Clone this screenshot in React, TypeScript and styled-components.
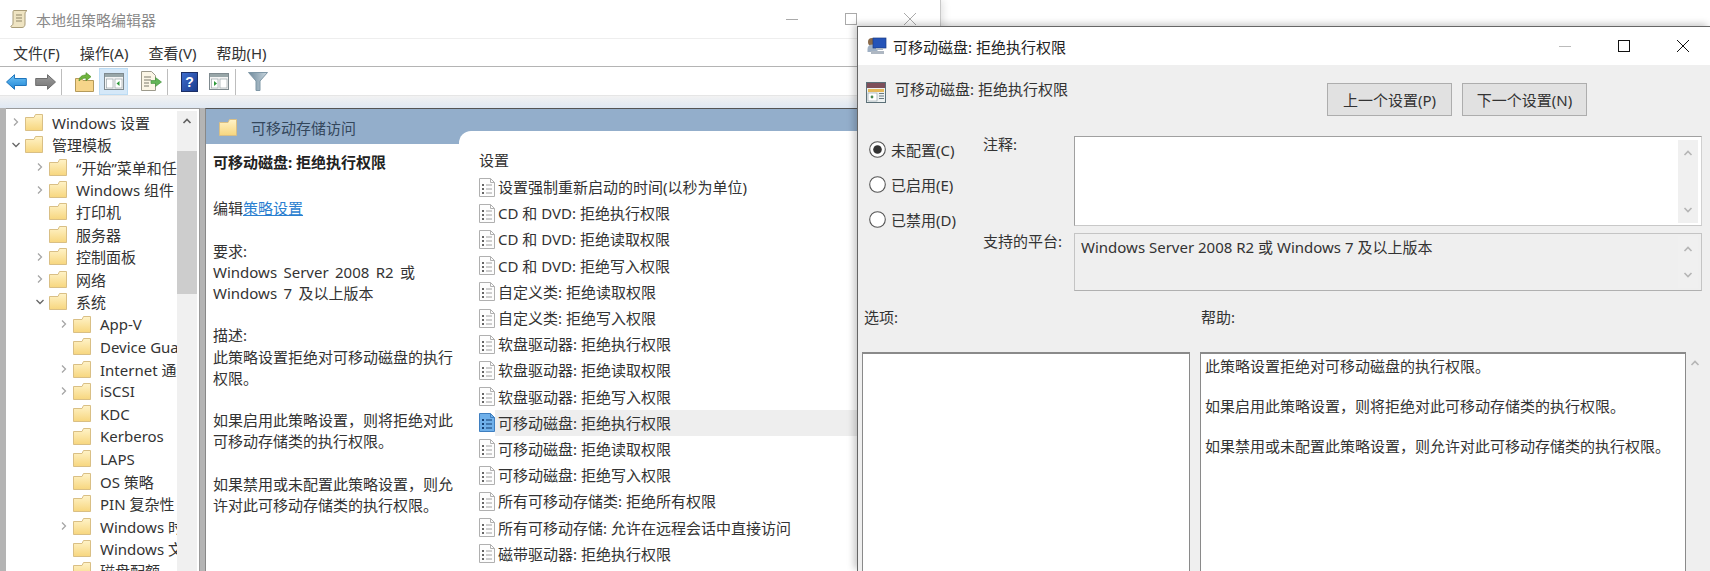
import styled, { createGlobalStyle } from 'styled-components';

const FONT = '"Noto Sans", "Noto Sans CJK SC", sans-serif';

const GlobalStyle = createGlobalStyle`
	html, body {
		margin: 0;
		padding: 0;
		width: 1710px;
		height: 571px;
		overflow: hidden;
		background: #fff;
		font-family: ${FONT};
		font-size: 15px;
		color: #333;
	}
	* {
		box-sizing: border-box;
	}
	svg {
		flex: none;
	}
`;

const TREE = [
	{ level: 0, arrow: 'right', label: 'Windows 设置' },
	{ level: 0, arrow: 'down', label: '管理模板' },
	{ level: 1, arrow: 'right', label: '“开始”菜单和任务栏' },
	{ level: 1, arrow: 'right', label: 'Windows 组件' },
	{ level: 1, arrow: '', label: '打印机' },
	{ level: 1, arrow: '', label: '服务器' },
	{ level: 1, arrow: 'right', label: '控制面板' },
	{ level: 1, arrow: 'right', label: '网络' },
	{ level: 1, arrow: 'down', label: '系统' },
	{ level: 2, arrow: 'right', label: 'App-V' },
	{ level: 2, arrow: '', label: 'Device Guard' },
	{ level: 2, arrow: 'right', label: 'Internet 通信管理' },
	{ level: 2, arrow: 'right', label: 'iSCSI' },
	{ level: 2, arrow: '', label: 'KDC' },
	{ level: 2, arrow: '', label: 'Kerberos' },
	{ level: 2, arrow: '', label: 'LAPS' },
	{ level: 2, arrow: '', label: 'OS 策略' },
	{ level: 2, arrow: '', label: 'PIN 复杂性' },
	{ level: 2, arrow: 'right', label: 'Windows 时间服务' },
	{ level: 2, arrow: '', label: 'Windows 文件保护' },
	{ level: 2, arrow: '', label: '磁盘配额' },
];

const SETTINGS = [
	'设置强制重新启动的时间(以秒为单位)',
	'CD 和 DVD: 拒绝执行权限',
	'CD 和 DVD: 拒绝读取权限',
	'CD 和 DVD: 拒绝写入权限',
	'自定义类: 拒绝读取权限',
	'自定义类: 拒绝写入权限',
	'软盘驱动器: 拒绝执行权限',
	'软盘驱动器: 拒绝读取权限',
	'软盘驱动器: 拒绝写入权限',
	'可移动磁盘: 拒绝执行权限',
	'可移动磁盘: 拒绝读取权限',
	'可移动磁盘: 拒绝写入权限',
	'所有可移动存储类: 拒绝所有权限',
	'所有可移动存储: 允许在远程会话中直接访问',
	'磁带驱动器: 拒绝执行权限',
];
const SELECTED = 9;

function Folder() {
	return (
		<svg width="18" height="17" viewBox="0 0 18 17">
			<defs>
				<linearGradient id="fold" x1="0" y1="0" x2="0" y2="1">
					<stop offset="0" stopColor="#fff3c8" />
					<stop offset="1" stopColor="#f7d67e" />
				</linearGradient>
			</defs>
			<path d="M.5 3.500h8.500l1.500-3h7v16H.5z" fill="url(#fold)" stroke="#d9bf85" />
		</svg>
	);
}

function Chevron({ dir }: { dir: string }) {
	return (
		<svg width="10" height="10" viewBox="0 0 10 10" fill="none" stroke="#a6a6a6" strokeWidth="1.3">
			{dir === 'right' ? <path d="M3 1.500 6.500 5 3 8.500" /> : <path d="M1.500 3 5 6.500 8.500 3" stroke="#666" />}
		</svg>
	);
}

function ScrollArrow({ up, color = '#b5b5b5' }: { up?: boolean; color?: string }) {
	return (
		<svg width="10" height="8" viewBox="0 0 10 8" fill="none" stroke={color} strokeWidth="1.6">
			{up ? <path d="M1.500 6 5 2.500 8.500 6" /> : <path d="M1.500 2 5 5.500 8.500 2" />}
		</svg>
	);
}

function PolicyIcon({ active }: { active?: boolean }) {
	const stroke = active ? '#3f7fc0' : '#b0b0b0';
	const ink = active ? '#143f73' : '#666';
	return (
		<svg width="16" height="19" viewBox="0 0 16 19">
			<path d="M.5.5h11l4 4v14H.5z" fill={active ? '#6fb0ea' : '#fdfdfd'} stroke={stroke} />
			<path d="M11.500.5v4h4" fill="none" stroke={stroke} />
			<g fill={ink}>
				<rect x="3" y="6" width="2" height="2" />
				<rect x="3" y="10" width="2" height="2" />
				<rect x="3" y="14" width="2" height="2" />
			</g>
			<g stroke={active ? '#143f73' : '#a0a0a0'}>
				<path d="M7 7h6M7 11h6M7 15h6" />
			</g>
		</svg>
	);
}

function ScrollLogo() {
	return (
		<svg width="19" height="20" viewBox="0 0 19 20">
			<path d="M4 1.500h13c-1.500 1-2 2-2 3.500v10c0 2-1 3.500-3 3.500H2c-1 0-1.500-1-1-1.500 1.500-.5 2-1.500 2-3V4c0-1.500 0-2.500 1-2.500z" fill="#efe4c2" stroke="#a99c78" />
			<path d="M6 6h6M6 9h6M6 12h6" stroke="#8f8668" />
		</svg>
	);
}

function BackArrow({ flip, top, bottom, edge }: { flip?: boolean; top: string; bottom: string; edge: string }) {
	const id = flip ? 'arrF' : 'arrB';
	return (
		<svg width="21" height="16" viewBox="0 0 21 16">
			<defs>
				<linearGradient id={id} x1="0" y1="0" x2="0" y2="1">
					<stop offset="0" stopColor={top} />
					<stop offset="1" stopColor={bottom} />
				</linearGradient>
			</defs>
			<path
				d={flip ? 'M20.500 8 12.500.7v3.800H.7v7h11.800v3.800z' : 'M.5 8 8.500.7v3.800h11.800v7H8.500v3.800z'}
				fill={`url(#${id})`}
				stroke={edge}
			/>
		</svg>
	);
}

function UpFolderIcon() {
	return (
		<svg width="19" height="20" viewBox="0 0 19 20">
			<path d="M.5 6.500h6l1.500 2h10.500v11H.5z" fill="#f6d58a" stroke="#b59a5a" />
			<path d="M4 9c0-4 3-6 7-6V.7l5 4-5 4V6c-3 0-5 1-7 3z" fill="#6fb53e" stroke="#4f8f26" strokeWidth=".7" />
		</svg>
	);
}

function PaneIcon({ flip }: { flip?: boolean }) {
	return (
		<svg width="20" height="17" viewBox="0 0 20 17">
			<rect x=".5" y=".5" width="19" height="16" fill="#f4f4f4" stroke="#7f8a8f" />
			<rect x="1" y="1" width="18" height="3" fill="#98a6a8" />
			<rect x="2.500" y="6" width="6.500" height="9" fill="#fff" stroke="#9aa5a8" strokeWidth=".7" />
			<rect x="11" y="6" width="7" height="9" fill="#fff" stroke="#9aa5a8" strokeWidth=".7" />
			{flip ? <path d="M5 8v5l3-2.500z" fill="#2f9a3a" /> : <path d="M15.500 8v5l-3-2.500z" fill="#2f9a3a" />}
		</svg>
	);
}

function ExportIcon() {
	return (
		<svg width="21" height="21" viewBox="0 0 21 21">
			<path d="M.5.5h10l4 4v15H.5z" fill="#fbf6e6" stroke="#9d9a8c" />
			<path d="M3 6h7M3 9h7M3 12h5M3 15h5" stroke="#7d7a6c" />
			<path d="M10 9.500h4.500V6.500l6 4.500-6 4.500v-3H10z" fill="#62b556" stroke="#3f8d38" strokeWidth=".6" />
		</svg>
	);
}

function HelpBook() {
	return (
		<svg width="17" height="20" viewBox="0 0 17 20">
			<defs>
				<linearGradient id="book" x1="0" y1="0" x2="1" y2="1">
					<stop offset="0" stopColor="#3f6fd0" />
					<stop offset="1" stopColor="#1a3a8a" />
				</linearGradient>
			</defs>
			<rect x=".5" y=".5" width="16" height="19" fill="url(#book)" stroke="#1c2f66" />
			<text x="8.500" y="15" fontSize="14" fontWeight="700" textAnchor="middle" fill="#fff" fontFamily="Liberation Sans, sans-serif">
				?
			</text>
		</svg>
	);
}

function Funnel() {
	return (
		<svg width="20" height="19" viewBox="0 0 20 19">
			<defs>
				<linearGradient id="fun" x1="0" y1="0" x2="1" y2="0">
					<stop offset="0" stopColor="#6f8a9c" />
					<stop offset="1" stopColor="#c9d6de" />
				</linearGradient>
			</defs>
			<path d="M.5.5h19L12 9v9.500H8V9z" fill="url(#fun)" stroke="#7f97a6" />
		</svg>
	);
}

function ComputerIcon() {
	return (
		<svg width="20" height="18" viewBox="0 0 20 18">
			<circle cx="5" cy="5" r="4" fill="#8a6a4a" />
			<path d="M.5 12c0-3 2-4.500 5-4.500s5 1.500 5 4.500v3H.5z" fill="#9fb0c4" />
			<rect x="6" y="1" width="13" height="10" fill="#2453b8" stroke="#1b3a80" strokeWidth=".7" />
			<path d="M9 11h7v2H9zM4 14h13v3H4z" fill="#aeb7c2" />
		</svg>
	);
}

function PolicyPaneIcon() {
	return (
		<svg width="20" height="21" viewBox="0 0 20 21">
			<rect x=".5" y=".5" width="19" height="20" fill="#eef2f2" stroke="#5c7078" />
			<rect x="1" y="1" width="18" height="5" fill="#7d4f5a" />
			<rect x="2" y="7" width="16" height="3" fill="#e5b95a" />
			<rect x="2" y="11" width="9" height="8" fill="#fff" stroke="#8a9aa0" strokeWidth=".6" />
			<path d="M13 11.500h5M13 14h5M13 16.500h5" stroke="#6a7a80" />
			<circle cx="6" cy="15" r="1.400" fill="#4a8a50" />
		</svg>
	);
}

function Radio({ checked }: { checked?: boolean }) {
	return (
		<svg width="17" height="17" viewBox="0 0 17 17">
			<circle cx="8.500" cy="8.500" r="7.800" fill="#fff" stroke="#555" strokeWidth="1.100" />
			{checked && <circle cx="8.500" cy="8.500" r="4.300" fill="#333" />}
		</svg>
	);
}

export default function App() {
	return (
		<Desktop>
			<GlobalStyle />
			<MainWindow>
				<TitleBar>
					<ScrollLogo />
					<TitleText>本地组策略编辑器</TitleText>
					<WinControls $right={24} $color="#aaa">
						<MinLine />
						<MaxBox />
						<CloseMark />
					</WinControls>
				</TitleBar>
				<MenuBar>
					<MenuItem>文件(F)</MenuItem>
					<MenuItem>操作(A)</MenuItem>
					<MenuItem>查看(V)</MenuItem>
					<MenuItem>帮助(H)</MenuItem>
				</MenuBar>
				<Toolbar>
					<ToolButton $w={29}>
						<BackArrow top="#6fc3f5" bottom="#1f86d6" edge="#1f74bb" />
					</ToolButton>
					<ToolButton $w={29}>
						<BackArrow flip top="#9c9c9c" bottom="#767676" edge="#6e6e6e" />
					</ToolButton>
					<ToolSep />
					<ToolButton $w={30}>
						<UpFolderIcon />
					</ToolButton>
					<ToolButton $w={29} $active>
						<PaneIcon />
					</ToolButton>
					<ToolButton $w={38} $pad={8}>
						<ExportIcon />
					</ToolButton>
					<ToolSep />
					<ToolButton $w={28}>
						<HelpBook />
					</ToolButton>
					<ToolButton $w={31}>
						<PaneIcon flip />
					</ToolButton>
					<ToolSep />
					<ToolButton $w={30}>
						<Funnel />
					</ToolButton>
				</Toolbar>
				<ToolStrip />
				<Workspace>
					<TreePane>
						<TreeList>
							{TREE.map((row) => (
								<TreeRow key={row.label} $level={row.level}>
									<ArrowSlot>{row.arrow && <Chevron dir={row.arrow} />}</ArrowSlot>
									<Folder />
									<TreeLabel>{row.label}</TreeLabel>
								</TreeRow>
							))}
						</TreeList>
						<TreeScroll>
							<ScrollCap>
								<ScrollArrow up color="#606060" />
							</ScrollCap>
							<ScrollThumb />
						</TreeScroll>
					</TreePane>
					<ContentPane>
						<DetailColumn>
							<PaneHeader>
								<Folder />
								<span>可移动存储访问</span>
							</PaneHeader>
							<DetailBody>
								<DetailTitle>可移动磁盘: 拒绝执行权限</DetailTitle>
								<DetailPara>
									编辑<PolicyLink>策略设置</PolicyLink>
								</DetailPara>
								<DetailPara>
									要求:
									<br />
									Windows Server 2008 R2 或 Windows 7 及以上版本
								</DetailPara>
								<DetailPara>
									描述:
									<br />
									此策略设置拒绝对可移动磁盘的执行权限。
								</DetailPara>
								<DetailPara>如果启用此策略设置，则将拒绝对此可移动存储类的执行权限。</DetailPara>
								<DetailPara>如果禁用或未配置此策略设置，则允许对此可移动存储类的执行权限。</DetailPara>
							</DetailBody>
						</DetailColumn>
						<SettingsColumn>
							<SettingsHead>设置</SettingsHead>
							{SETTINGS.map((item, idx) => (
								<SettingRow key={item}>
									<PolicyIcon active={idx === SELECTED} />
									<SettingLabel $selected={idx === SELECTED}>{item}</SettingLabel>
								</SettingRow>
							))}
						</SettingsColumn>
					</ContentPane>
				</Workspace>
			</MainWindow>

			<Dialog>
				<DialogTitleBar>
					<ComputerIcon />
					<DialogTitle>可移动磁盘: 拒绝执行权限</DialogTitle>
					<WinControls $right={21} $color="#111">
						<MinLine $light />
						<MaxBox />
						<CloseMark />
					</WinControls>
				</DialogTitleBar>
				<DialogBody>
					<DialogHead>
						<DialogHeadTitle>
							<PolicyPaneIcon />
							<span>可移动磁盘: 拒绝执行权限</span>
						</DialogHeadTitle>
						<NavButtons>
							<NavButton>上一个设置(P)</NavButton>
							<NavButton>下一个设置(N)</NavButton>
						</NavButtons>
					</DialogHead>
					<ConfigArea>
						<RadioGroup>
							<RadioRow>
								<Radio checked />
								未配置(C)
							</RadioRow>
							<RadioRow>
								<Radio />
								已启用(E)
							</RadioRow>
							<RadioRow>
								<Radio />
								已禁用(D)
							</RadioRow>
						</RadioGroup>
						<FieldGrid>
							<FieldLabel>注释:</FieldLabel>
							<CommentBox>
								<BoxScroll>
									<ScrollArrow up />
									<ScrollArrow />
								</BoxScroll>
							</CommentBox>
							<FieldLabel>支持的平台:</FieldLabel>
							<PlatformBox>
								<span>Windows Server 2008 R2 或 Windows 7 及以上版本</span>
								<BoxScroll>
									<ScrollArrow up />
									<ScrollArrow />
								</BoxScroll>
							</PlatformBox>
						</FieldGrid>
					</ConfigArea>
					<PaneLabels>
						<span>选项:</span>
						<span>帮助:</span>
					</PaneLabels>
					<BottomPanes>
						<OptionsBox />
						<HelpBox>
							<p>此策略设置拒绝对可移动磁盘的执行权限。</p>
							<p>如果启用此策略设置，则将拒绝对此可移动存储类的执行权限。</p>
							<p>如果禁用或未配置此策略设置，则允许对此可移动存储类的执行权限。</p>
						</HelpBox>
						<HelpScroll>
							<ScrollArrow up />
						</HelpScroll>
					</BottomPanes>
				</DialogBody>
			</Dialog>
		</Desktop>
	);
}

const Desktop = styled.div`
	position: relative;
	width: 1710px;
	height: 571px;
	overflow: hidden;
	background: #fff;
`;

const MainWindow = styled.section`
	display: flex;
	flex-direction: column;
	width: 941px;
	height: 571px;
	background: #fff;
	border-right: 1px solid #c8c8c8;
	box-shadow: 2px 0 8px rgba(0, 0, 0, 0.12);
`;

const TitleBar = styled.header`
	display: flex;
	align-items: center;
	height: 38px;
	padding-left: 10px;
	flex: none;
`;

const TitleText = styled.span`
	margin-left: 7px;
	color: #8a8a8a;
`;

const WinControls = styled.div<{ $right: number; $color: string }>`
	display: flex;
	align-items: center;
	gap: 47px;
	margin-left: auto;
	margin-right: ${(p) => p.$right}px;
	color: ${(p) => p.$color};
`;

const MinLine = styled.i<{ $light?: boolean }>`
	display: block;
	width: 12px;
	height: 1px;
	background: ${(p) => (p.$light ? '#bbb' : 'currentColor')};
`;

const MaxBox = styled.i`
	display: block;
	width: 12px;
	height: 12px;
	border: 1px solid currentColor;
`;

const CloseMark = styled.i`
	display: block;
	width: 12px;
	height: 12px;
	background:
		linear-gradient(45deg, transparent 46%, currentColor 46%, currentColor 54%, transparent 54%),
		linear-gradient(-45deg, transparent 46%, currentColor 46%, currentColor 54%, transparent 54%);
`;

const MenuBar = styled.nav`
	display: flex;
	align-items: center;
	gap: 20px;
	height: 29px;
	padding-left: 13px;
	flex: none;
	border-top: 1px solid #eee;
	border-bottom: 1px solid #b4b4b4;
`;

const MenuItem = styled.span`
	white-space: nowrap;
	color: #333;
`;

const Toolbar = styled.div`
	display: flex;
	align-items: center;
	height: 28px;
	padding: 1px 0 0 2px;
	flex: none;
`;

const ToolButton = styled.div<{ $w: number; $active?: boolean; $pad?: number }>`
	display: flex;
	align-items: center;
	justify-content: center;
	width: ${(p) => p.$w}px;
	height: 27px;
	padding-left: ${(p) => p.$pad ?? 0}px;
	background: ${(p) => (p.$active ? '#d5e8f8' : 'transparent')};
	border: 1px solid ${(p) => (p.$active ? '#bcdcf4' : 'transparent')};
`;

const ToolSep = styled.i`
	display: block;
	width: 1px;
	height: 26px;
	margin: 0 7px 0 1px;
	background: #bdbdbd;
`;

const ToolStrip = styled.div`
	height: 13px;
	flex: none;
	border-top: 1px solid #e6e6e6;
	background: linear-gradient(#f2f2f2, #dfe8f3);
`;

const Workspace = styled.div`
	display: flex;
	flex: 1;
	min-height: 0;
	background: #b4b4b4;
	padding-left: 6px;
`;

const TreePane = styled.div`
	display: flex;
	width: 194px;
	flex: none;
	padding: 2px 2px 0 0;
	background: #fff;
	border-top: 1px solid #9a9a9a;
	border-right: 1px solid #9a9a9a;
	overflow: hidden;
`;

const TreeList = styled.div`
	width: 171px;
	flex: none;
	overflow: hidden;
`;

const TreeRow = styled.div<{ $level: number }>`
	display: flex;
	align-items: center;
	height: 22.45px;
	padding-left: ${(p) => p.$level * 24}px;
	white-space: nowrap;
`;

const ArrowSlot = styled.span`
	display: flex;
	justify-content: center;
	width: 19px;
	flex: none;
`;

const TreeLabel = styled.span`
	margin-left: 9px;
	color: #333;
`;

const TreeScroll = styled.div`
	display: flex;
	flex-direction: column;
	width: 20px;
	flex: none;
	background: #f0f0f0;
`;

const ScrollCap = styled.div`
	display: flex;
	align-items: center;
	justify-content: center;
	height: 40px;
	padding-bottom: 20px;
`;

const ScrollThumb = styled.div`
	height: 143px;
	background: #cdcdcd;
`;

const ContentPane = styled.div`
	display: grid;
	grid-template-columns: 253px 1fr;
	flex: 1;
	margin-left: 5px;
	background: #93aecb;
	border-top: 1px solid #555;
	border-left: 1px solid #888;
	padding-top: 1px;
`;

const DetailColumn = styled.div`
	display: flex;
	flex-direction: column;
	min-width: 0;
`;

const PaneHeader = styled.div`
	display: flex;
	align-items: center;
	gap: 14px;
	height: 34px;
	padding-left: 13px;
	flex: none;
	color: #33475c;
`;

const DetailBody = styled.div`
	flex: 1;
	padding: 8px 0 0 7px;
	background: #fff;
	line-height: 21.2px;
`;

const DetailTitle = styled.h3`
	margin: 0 0 25px;
	font-size: 15px;
	font-weight: 700;
	color: #222;
`;

const DetailPara = styled.p`
	margin: 0 0 21.2px;
	width: 245px;
	word-spacing: 2.5px;
	color: #333;
`;

const PolicyLink = styled.span`
	color: #2b7fd0;
	text-decoration: underline;
`;

const SettingsColumn = styled.div`
	margin-top: 21px;
	padding: 21px 0 0 20px;
	background: #fff;
	border-top-left-radius: 12px;
`;

const SettingsHead = styled.div`
	height: 16px;
	margin-bottom: 6px;
	line-height: 16px;
	color: #333;
`;

const SettingRow = styled.div`
	display: flex;
	align-items: center;
	height: 26.2px;
	white-space: nowrap;
`;

const SettingLabel = styled.span<{ $selected?: boolean }>`
	flex: 1;
	height: 26px;
	line-height: 26px;
	padding-left: 3px;
	background: ${(p) => (p.$selected ? '#eeeeee' : 'transparent')};
	color: #333;
`;

const Dialog = styled.section`
	position: absolute;
	left: 857px;
	top: 26px;
	width: 853px;
	height: 545px;
	display: flex;
	flex-direction: column;
	background: #efefef;
	border-top: 1px solid #666;
	border-left: 1px solid #666;
	box-shadow: -3px -2px 7px rgba(0, 0, 0, 0.22);
`;

const DialogTitleBar = styled.header`
	display: flex;
	align-items: center;
	height: 38px;
	padding-left: 9px;
	flex: none;
	background: #fff;
`;

const DialogTitle = styled.span`
	margin-left: 6px;
	color: #222;
`;

const DialogBody = styled.div`
	display: flex;
	flex-direction: column;
	flex: 1;
	min-height: 0;
	padding: 0 7px 0 4px;
`;

const DialogHead = styled.div`
	display: flex;
	justify-content: space-between;
	height: 66px;
	padding: 18px 116px 0 4px;
	flex: none;
`;

const DialogHeadTitle = styled.div`
	display: flex;
	align-items: flex-start;
	gap: 9px;
	line-height: 13px;
	color: #333;
	& > svg {
		margin-top: -1px;
	}
`;

const NavButtons = styled.div`
	display: flex;
	gap: 10px;
`;

const NavButton = styled.div`
	display: flex;
	align-items: center;
	justify-content: center;
	width: 125px;
	height: 33px;
	background: #e1e1e1;
	border: 1px solid #adadad;
	color: #333;
`;

const ConfigArea = styled.div`
	display: flex;
	flex: none;
`;

const RadioGroup = styled.div`
	display: flex;
	flex-direction: column;
	width: 121px;
	padding: 1px 0 0 7px;
	flex: none;
`;

const RadioRow = styled.label`
	display: flex;
	align-items: center;
	gap: 5px;
	height: 35px;
	color: #333;
`;

const FieldGrid = styled.div`
	display: grid;
	grid-template-columns: 91px 628px;
	grid-template-rows: 90px 58px;
	row-gap: 7px;
	padding-top: 5px;
`;

const FieldLabel = styled.div`
	line-height: 16px;
	color: #333;
`;

const CommentBox = styled.div`
	display: flex;
	justify-content: flex-end;
	padding: 3px 3px 2px 0;
	background: #fff;
	border: 1px solid #a0a0a0;
	border-right-color: #d0d0d0;
	border-bottom-color: #c8c8c8;
`;

const PlatformBox = styled.div`
	display: flex;
	justify-content: space-between;
	padding: 2px 3px 2px 6px;
	line-height: 22px;
	background: #efefef;
	border: 1px solid #c4c4c4;
	border-bottom-color: #b0b0b0;
	color: #333;
`;

const BoxScroll = styled.div`
	display: flex;
	flex-direction: column;
	align-items: center;
	justify-content: space-between;
	width: 20px;
	padding: 9px 0;
	background: #f0f0f0;
`;

const PaneLabels = styled.div`
	display: flex;
	height: 61px;
	padding: 18px 0 0 2px;
	flex: none;
	line-height: 16px;
	color: #333;
	span:first-child {
		width: 337px;
	}
`;

const BottomPanes = styled.div`
	display: flex;
	flex: 1;
	min-height: 0;
`;

const OptionsBox = styled.div`
	width: 328px;
	background: #fff;
	border: 1px solid #8a8a8a;
	border-width: 2px 1px 0 1px;
	flex: none;
`;

const HelpBox = styled.div`
	width: 486px;
	margin-left: 10px;
	padding: 2px 4px 0;
	background: #fff;
	border: 1px solid #8a8a8a;
	border-width: 2px 1px 0 1px;
	flex: none;
	line-height: 20px;
	color: #333;
	p {
		margin: 0 0 20px;
		white-space: nowrap;
	}
`;

const HelpScroll = styled.div`
	display: flex;
	justify-content: center;
	width: 20px;
	padding-top: 7px;
`;
